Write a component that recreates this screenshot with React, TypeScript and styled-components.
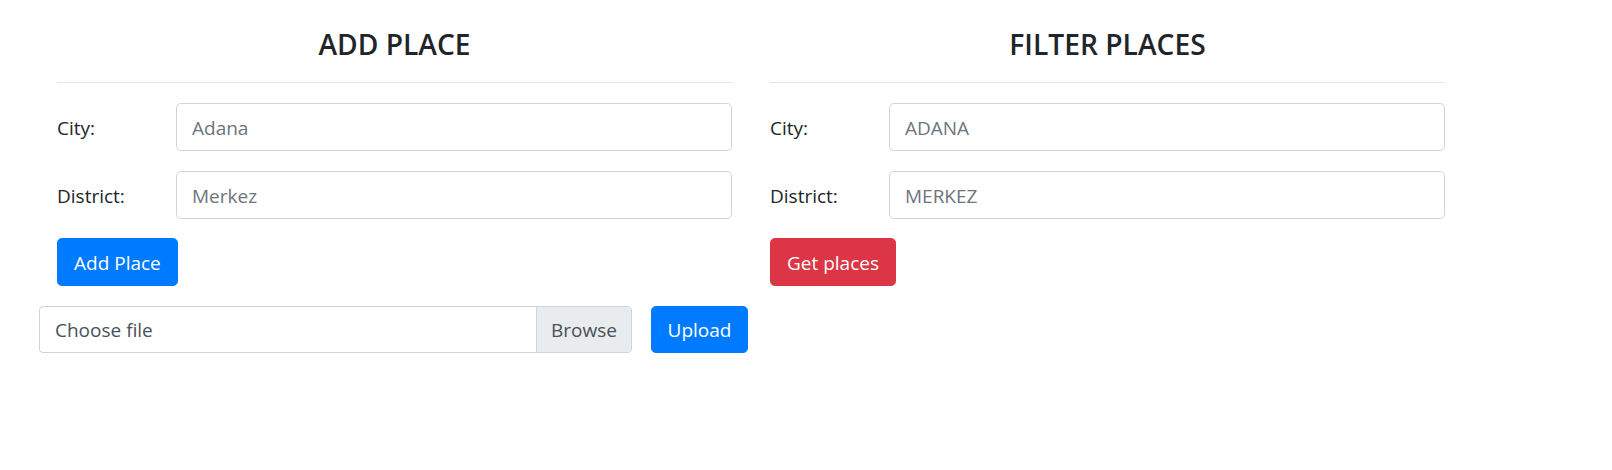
import React from "react";
import styled, { createGlobalStyle } from "styled-components";

const GlobalStyle = createGlobalStyle`
  html, body {
    margin: 0;
    padding: 0;
    background: #ffffff;
  }
  body {
    font-family: "Open Sans", "Noto Sans", "Liberation Sans", sans-serif;
    color: #212529;
  }
  * { box-sizing: border-box; }
`;

const Page = styled.div`
  padding-top: 28px;
  width: 1612px;
  height: 470px;
`;

const Columns = styled.div`
  display: grid;
  grid-template-columns: 675px 675px;
  column-gap: 38px;
  padding-left: 57px;
`;

const Panel = styled.section`
  display: flex;
  flex-direction: column;
  align-items: stretch;
`;

const Title = styled.h3`
  margin: 0 0 20px 0;
  font-size: 28.2px;
  line-height: 33.6px;
  font-weight: 600;
  text-align: center;
  color: #212529;
`;

const Rule = styled.hr`
  margin: 0 0 20px 0;
  border: 0;
  border-top: 1px solid rgba(0, 0, 0, 0.1);
  height: 0;
`;

const FieldRow = styled.div`
  display: grid;
  grid-template-columns: 119px 1fr;
  align-items: center;
  height: 48px;
  margin-bottom: 20px;
`;

const Label = styled.label`
  font-size: 19px;
  line-height: 30px;
  padding-top: 2px;
  color: #212529;
`;

const Input = styled.input`
  height: 48px;
  width: 100%;
  padding: 2px 15px 0;
  font-family: inherit;
  font-size: 19px;
  color: #495057;
  border: 1px solid #ced4da;
  border-radius: 4.8px;
  background: #fff;
  outline: none;
  &::placeholder {
    color: #6c757d;
    opacity: 1;
  }
`;

const Actions = styled.div`
  display: flex;
  margin-top: -1px;
`;

const Button = styled.button<{ $variant: "primary" | "danger" }>`
  height: 48px;
  padding: 2px 16px 0;
  font-family: inherit;
  font-size: 19px;
  line-height: 30px;
  color: #ffffff;
  background: ${(p) => (p.$variant === "primary" ? "#007bff" : "#dc3545")};
  border: 1px solid ${(p) => (p.$variant === "primary" ? "#007bff" : "#dc3545")};
  border-radius: 4.8px;
  cursor: pointer;
`;

const UploadRow = styled.div`
  display: flex;
  align-items: center;
  gap: 19px;
  padding-left: 39px;
  margin-top: 20px;
`;

const FileBox = styled.label`
  display: flex;
  width: 593px;
  height: 47px;
  border: 1px solid #ced4da;
  border-radius: 4px;
  overflow: hidden;
  font-size: 19px;
  color: #495057;
  background: #fff;
`;

const FileName = styled.span`
  flex: 1;
  display: flex;
  align-items: center;
  padding: 2px 0 0 15px;
`;

const Browse = styled.span`
  display: flex;
  align-items: center;
  justify-content: center;
  padding-top: 2px;
  width: 95px;
  background: #e9ecef;
  border-left: 1px solid #ced4da;
  color: #495057;
`;

const UploadButton = styled(Button)`
  height: 47px;
  width: 97px;
  padding: 2px 0 0;
`;

export default function App() {
  return (
    <>
      <GlobalStyle />
      <Page>
        <Columns>
          <Panel>
            <Title>ADD PLACE</Title>
            <Rule />
            <FieldRow>
              <Label>City:</Label>
              <Input placeholder="Adana" />
            </FieldRow>
            <FieldRow>
              <Label>District:</Label>
              <Input placeholder="Merkez" />
            </FieldRow>
            <Actions>
              <Button $variant="primary">Add Place</Button>
            </Actions>
          </Panel>
          <Panel>
            <Title>FILTER PLACES</Title>
            <Rule />
            <FieldRow>
              <Label>City:</Label>
              <Input placeholder="ADANA" />
            </FieldRow>
            <FieldRow>
              <Label>District:</Label>
              <Input placeholder="MERKEZ" />
            </FieldRow>
            <Actions>
              <Button $variant="danger">Get places</Button>
            </Actions>
          </Panel>
        </Columns>
        <UploadRow>
          <FileBox>
            <FileName>Choose file</FileName>
            <Browse>Browse</Browse>
          </FileBox>
          <UploadButton $variant="primary">Upload</UploadButton>
        </UploadRow>
      </Page>
    </>
  );
}
